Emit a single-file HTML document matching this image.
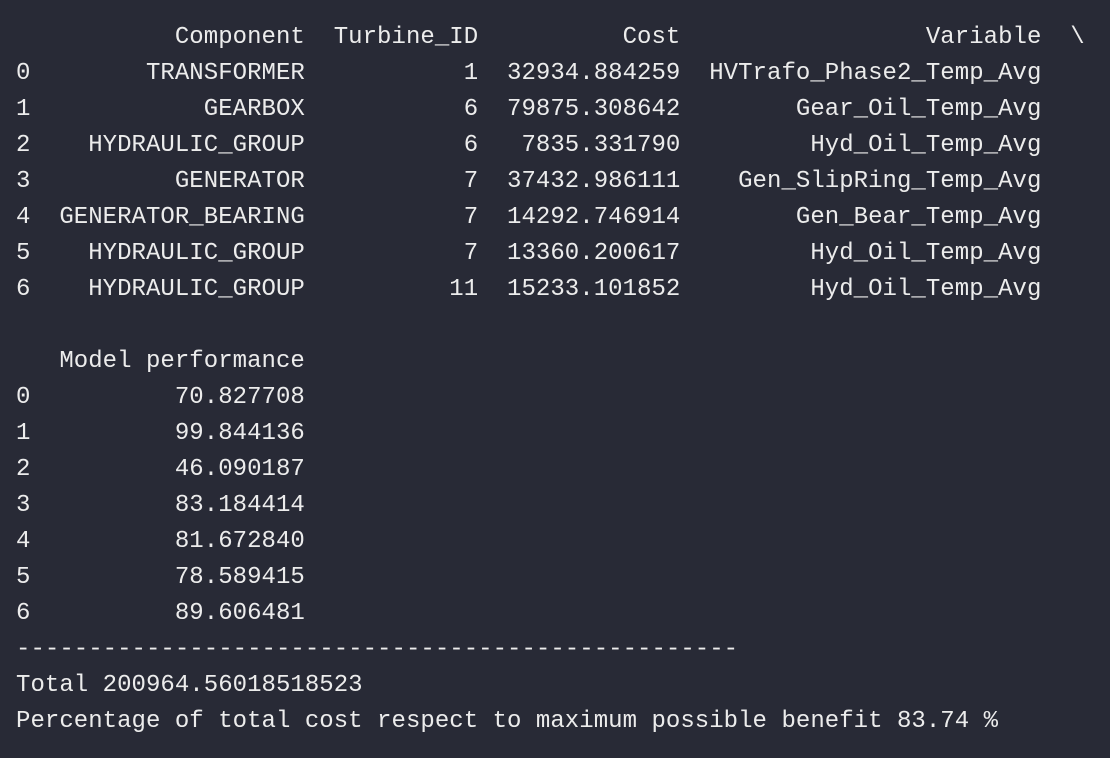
<!DOCTYPE html>
<html><head><meta charset="utf-8"><style>
html,body{margin:0;padding:0;background:#282a36;width:1110px;height:758px;overflow:hidden}
pre{margin:0;position:absolute;left:16px;top:20px;font-family:"Liberation Mono",monospace;font-size:24px;line-height:36px;color:#ececec;letter-spacing:0.04px}
</style></head><body><pre>           Component  Turbine_ID          Cost                 Variable  \
0        TRANSFORMER           1  32934.884259  HVTrafo_Phase2_Temp_Avg
1            GEARBOX           6  79875.308642        Gear_Oil_Temp_Avg
2    HYDRAULIC_GROUP           6   7835.331790         Hyd_Oil_Temp_Avg
3          GENERATOR           7  37432.986111    Gen_SlipRing_Temp_Avg
4  GENERATOR_BEARING           7  14292.746914        Gen_Bear_Temp_Avg
5    HYDRAULIC_GROUP           7  13360.200617         Hyd_Oil_Temp_Avg
6    HYDRAULIC_GROUP          11  15233.101852         Hyd_Oil_Temp_Avg

   Model performance
0          70.827708
1          99.844136
2          46.090187
3          83.184414
4          81.672840
5          78.589415
6          89.606481
--------------------------------------------------
Total 200964.56018518523
Percentage of total cost respect to maximum possible benefit 83.74 %</pre></body></html>
